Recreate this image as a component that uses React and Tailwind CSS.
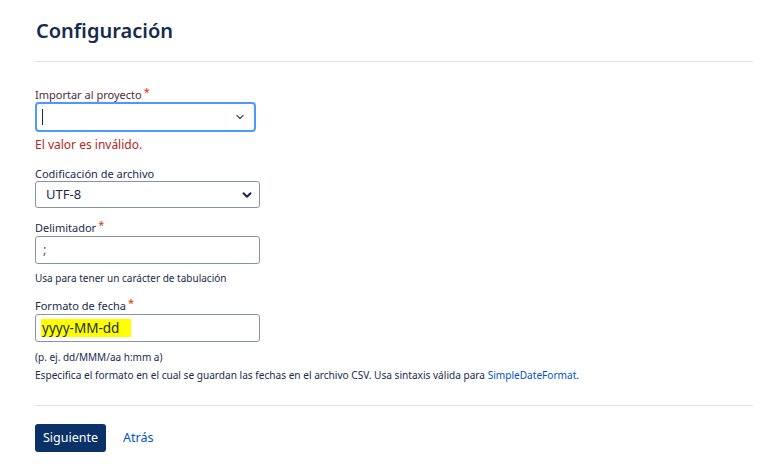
import { ChevronDown } from "lucide-react";

const font = { fontFamily: '"Noto Sans", "Open Sans", sans-serif' };

function Label({ children, required, className = "text-[#172B4D]" }) {
  return (
    <div className={`flex items-start h-[14px] text-[11px] leading-[14px] ${className}`}>
      <span>{children}</span>
      {required && <span className="ml-[2px] -mt-[3px] text-[#DE350B] text-[11px] leading-[14px]">*</span>}
    </div>
  );
}

export default function App() {
  return (
    <div className="min-h-screen bg-white pl-[35px] pr-[8px] pt-[17px]" style={font}>
      {/* Header */}
      <h1 className="text-[20px] leading-[28px] font-semibold text-[#172B4D] pl-[1px]">Configuración</h1>
      <hr className="mt-[16px] border-t border-[#DFE1E6]" />

      <form className="mt-[26px]">
        {/* Importar al proyecto */}
        <Label required className="text-[#4E2A3A]">Importar al proyecto</Label>
        <div className="w-[221px] h-[30px] rounded-[4px] border-2 border-[#4C9AFF] flex items-center justify-between pl-[5px] pr-[8px]">
          <span className="w-[1px] h-[16px] bg-[#172B4D]" />
          <ChevronDown size={12} strokeWidth={2.5} className="text-[#42526E]" />
        </div>
        <p className="mt-[5px] text-[12px] leading-[16px] text-[#B3261E]">El valor es inválido.</p>

        {/* Codificación */}
        <div className="mt-[14px]">
          <Label>Codificación de archivo</Label>
          <div className="w-[225px] h-[27px] rounded-[3px] border border-[#8993A4] flex items-center justify-between pl-[10px] pr-[5px]">
            <span className="text-[13px] text-[#172B4D]">UTF-8</span>
            <ChevronDown size={14} strokeWidth={3.5} className="text-[#172B4D]" />
          </div>
        </div>

        {/* Delimitador */}
        <div className="mt-[13px]">
          <Label required>Delimitador</Label>
          <div className="mt-[1px] w-[225px] h-[28px] rounded-[3px] border border-[#8993A4] flex items-center pl-[7px]">
            <span className="text-[13px] text-[#42526E]">;</span>
          </div>
          <p className="mt-[7px] text-[10px] leading-[14px] text-[#172B4D]">Usa para tener un carácter de tabulación</p>
        </div>

        {/* Formato de fecha */}
        <div className="mt-[14px]">
          <Label required>Formato de fecha</Label>
          <div className="mt-[1px] w-[225px] h-[28px] rounded-[3px] border border-[#8993A4] flex items-center pl-[5px]">
            <span className="bg-[#FFFF00] text-[13.5px] leading-[18px] px-[1px] pr-[12px] text-[#172B4D]">yyyy-MM-dd</span>
          </div>
          <p className="mt-[8px] text-[10px] leading-[14px] text-[#172B4D]">(p. ej. dd/MMM/aa h:mm a)</p>
          <p className="mt-[4px] text-[10.1px] leading-[14px] text-[#172B4D]">
            Especifica el formato en el cual se guardan las fechas en el archivo CSV. Usa sintaxis válida para{" "}
            <a className="text-[#0052CC]">SimpleDateFormat</a>.
          </p>
        </div>

        <hr className="mt-[23px] border-t border-[#DFE1E6]" />

        <div className="mt-[18px] flex items-center gap-[17px]">
          <button type="button" className="h-[28px] px-[8px] rounded-[3px] bg-[#0A3168] text-white text-[12.5px]">
            Siguiente
          </button>
          <a className="text-[12.5px] text-[#0052CC]">Atrás</a>
        </div>
      </form>
    </div>
  );
}
